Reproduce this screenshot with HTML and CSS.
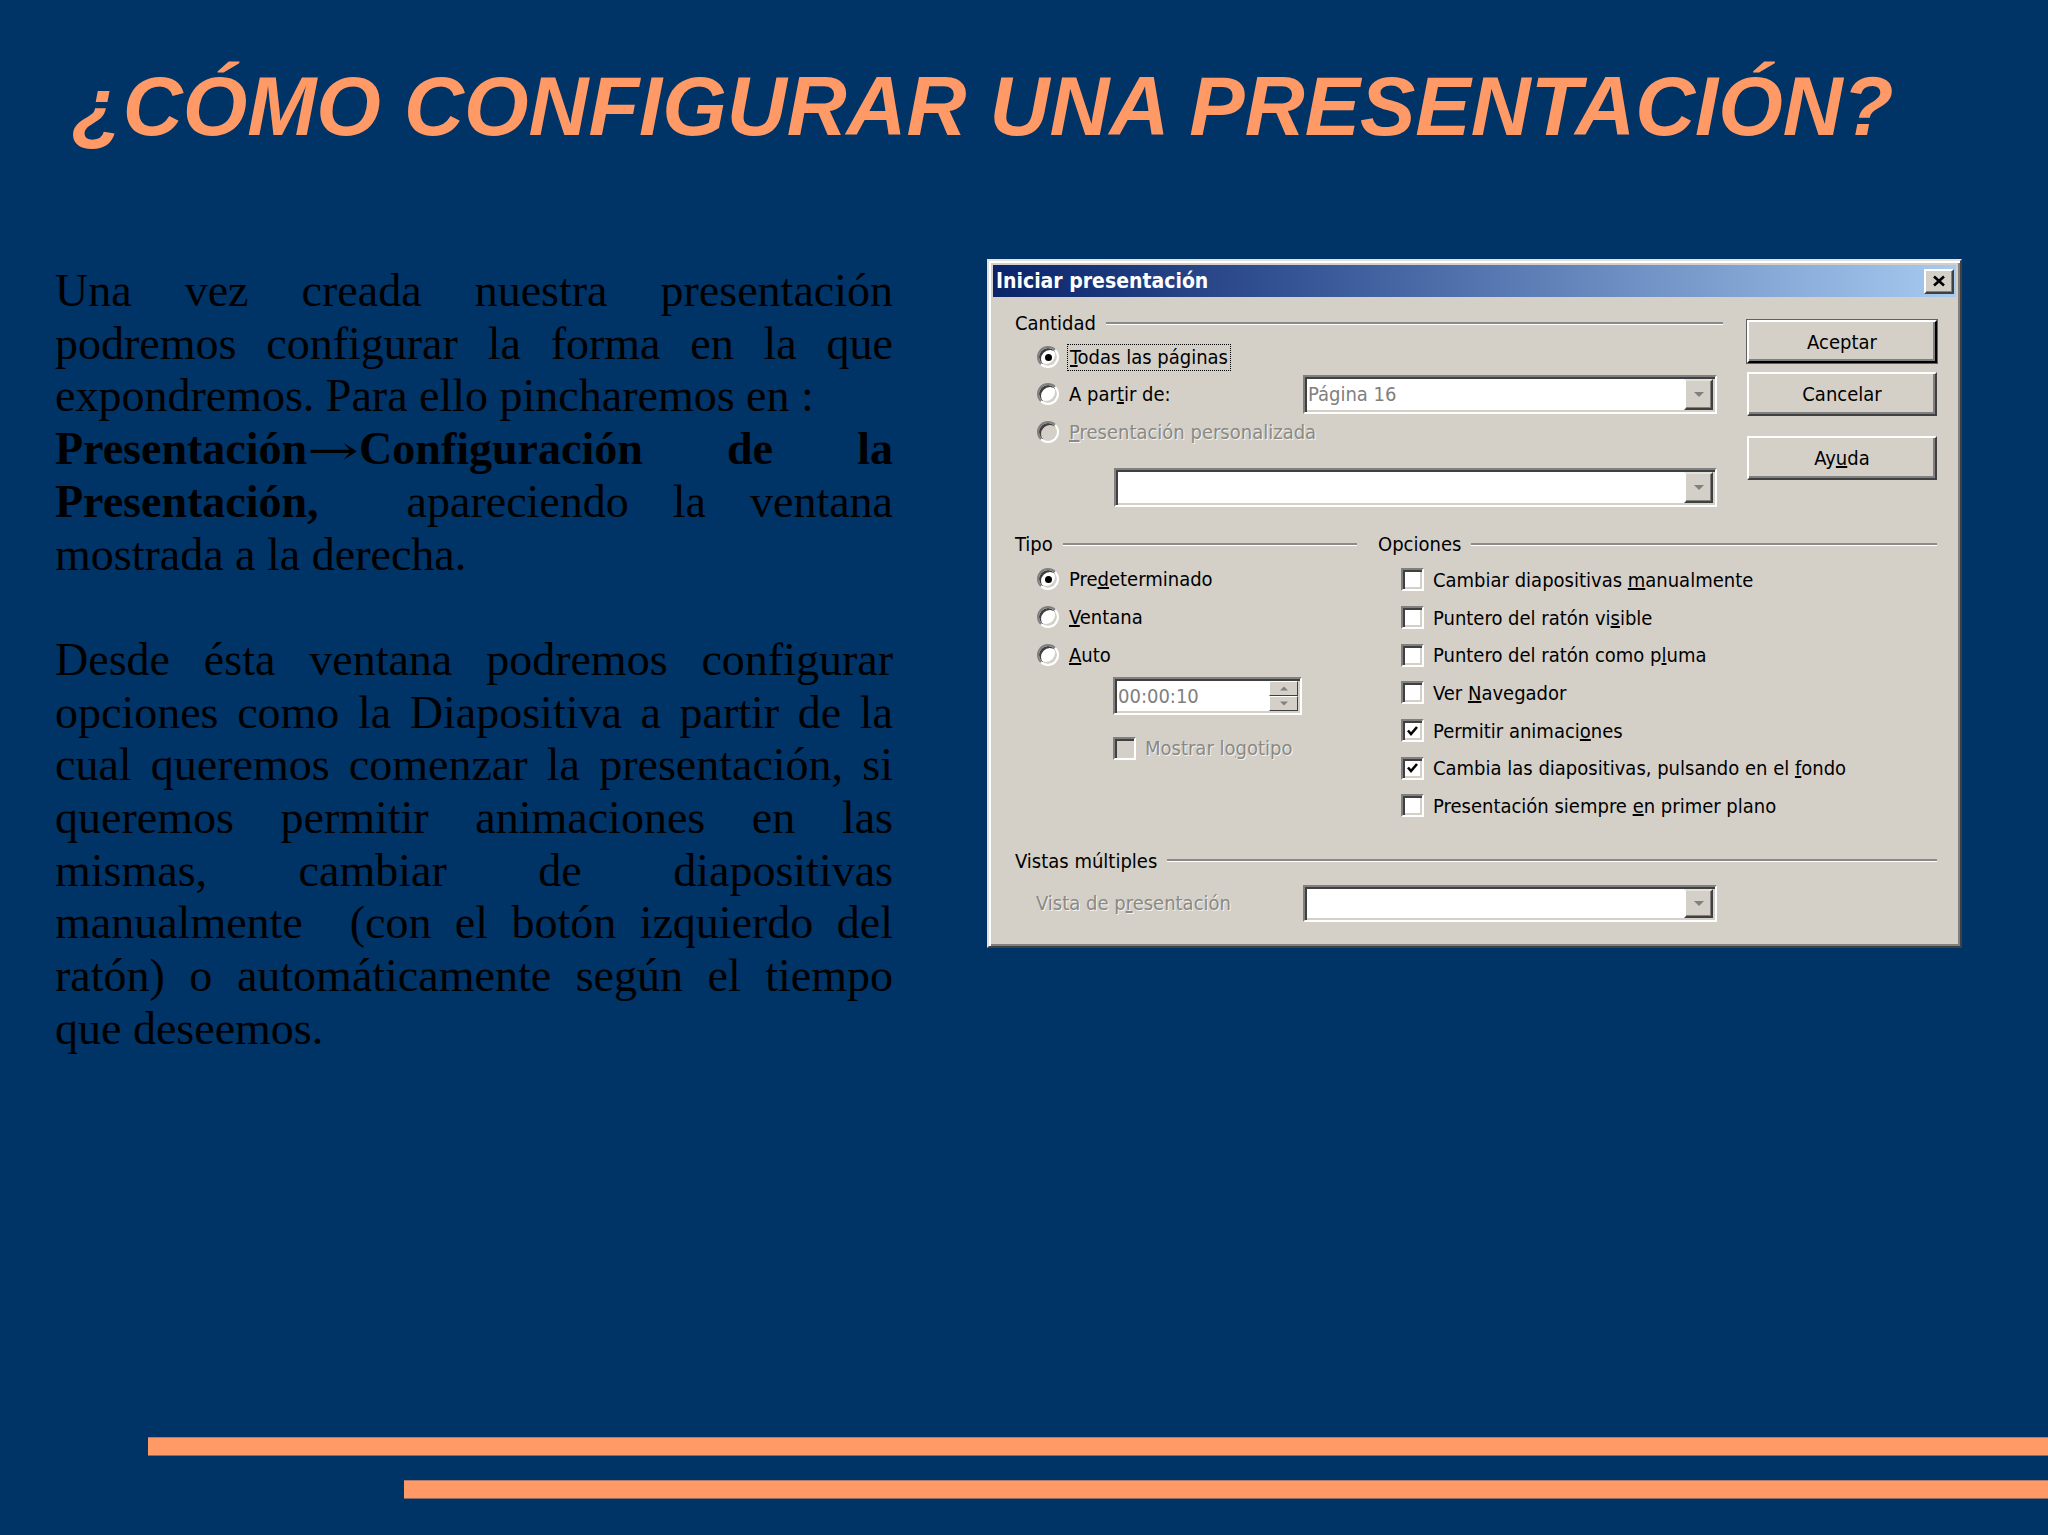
FILE: index.html
```html
<!DOCTYPE html>
<html lang="es">
<head>
<meta charset="utf-8">
<title>¿Cómo configurar una presentación?</title>
<link rel="stylesheet" href="styles.css">
</head>
<body>
<div class="slide">
  <h1 class="title">¿CÓMO CONFIGURAR UNA PRESENTACIÓN?</h1>

  <div class="content">
    <div class="text">
      <p>Una vez creada nuestra presentación podremos configurar la forma en la que expondremos. Para ello pincharemos en :<br><b>Presentación<span class="arrow">→</span>Configuración de la Presentación,</b>&nbsp; apareciendo la ventana mostrada a la derecha.</p>
      <p>Desde ésta ventana podremos configurar opciones como la Diapositiva a partir de la cual queremos comenzar la presentación, si queremos permitir animaciones en las mismas, cambiar de diapositivas manualmente&nbsp; (con el botón izquierdo del ratón) o automáticamente según el tiempo que deseemos.</p>
    </div>

    <div class="dialog">
      <div class="titlebar">
        <span class="wtitle">Iniciar presentación</span>
        <span class="close"><svg width="14" height="12" viewBox="0 0 14 12"><path d="M2 1.5 L12 10.5 M12 1.5 L2 10.5" stroke="#000" stroke-width="2.6" fill="none"/></svg></span>
      </div>

      <div class="dbody">
        <div class="top">
          <div class="cantidad">
            <div class="legend"><span>Cantidad</span></div>
            <div class="row r1"><span class="radio checked"></span><span class="lbl focus"><u>T</u>odas las páginas</span></div>
            <div class="row r2"><span class="radio"></span><span class="lbl">A par<u>t</u>ir de:</span>
              <div class="combo c-page"><span class="val">Página 16</span><span class="drop"><svg width="12" height="7" viewBox="0 0 12 7"><path d="M1 1 H11 L6 6 Z" fill="#808080"/></svg></span></div>
            </div>
            <div class="row r3"><span class="radio disabled"></span><span class="lbl dis"><u>P</u>resentación personalizada</span></div>
            <div class="combo c-custom"><span class="val"></span><span class="drop"><svg width="12" height="7" viewBox="0 0 12 7"><path d="M1 1 H11 L6 6 Z" fill="#808080"/></svg></span></div>
          </div>
          <div class="buttons">
            <div class="btn default">Aceptar</div>
            <div class="btn b-cancel">Cancelar</div>
            <div class="btn b-help">Ay<u>u</u>da</div>
          </div>
        </div>

        <div class="middle">
          <div class="tipo">
            <div class="legend"><span>Tipo</span></div>
            <div class="trows">
              <div class="row trow"><span class="radio checked"></span><span class="lbl">Pre<u>d</u>eterminado</span></div>
              <div class="row trow"><span class="radio"></span><span class="lbl"><u>V</u>entana</span></div>
              <div class="row trow"><span class="radio"></span><span class="lbl"><u>A</u>uto</span></div>
            </div>
            <div class="spin"><span class="val">00:00:10</span>
              <span class="sbtns">
                <span class="sb"><svg width="8" height="5" viewBox="0 0 8 5"><path d="M0 4.5 H8 L4 0.5 Z" fill="#808080"/></svg></span>
                <span class="sb"><svg width="8" height="5" viewBox="0 0 8 5"><path d="M0 0.5 H8 L4 4.5 Z" fill="#808080"/></svg></span>
              </span>
            </div>
            <div class="row logo"><span class="check disabled"></span><span class="lbl dis">Mostrar lo<u>g</u>otipo</span></div>
          </div>

          <div class="opciones">
            <div class="legend"><span>Opciones</span></div>
            <div class="orows">
              <div class="row orow"><span class="check"></span><span class="lbl">Cambiar diapositivas <u>m</u>anualmente</span></div>
              <div class="row orow"><span class="check"></span><span class="lbl">Puntero del ratón vi<u>s</u>ible</span></div>
              <div class="row orow"><span class="check"></span><span class="lbl">Puntero del ratón como p<u>l</u>uma</span></div>
              <div class="row orow"><span class="check"></span><span class="lbl">Ver <u>N</u>avegador</span></div>
              <div class="row orow"><span class="check on"><svg width="13" height="12" viewBox="0 0 13 12"><path d="M2 5.5 L5 9 L11 2" stroke="#000" stroke-width="2.6" fill="none"/></svg></span><span class="lbl">Permitir animaci<u>o</u>nes</span></div>
              <div class="row orow"><span class="check on"><svg width="13" height="12" viewBox="0 0 13 12"><path d="M2 5.5 L5 9 L11 2" stroke="#000" stroke-width="2.6" fill="none"/></svg></span><span class="lbl">Cambia las diapositivas, pulsando en el <u>f</u>ondo</span></div>
              <div class="row orow"><span class="check"></span><span class="lbl">Presentación siempre <u>e</u>n primer plano</span></div>
            </div>
          </div>
        </div>

        <div class="vistas">
          <div class="legend"><span>Vistas múltiples</span></div>
          <div class="row vrow"><span class="vlabel dis">Vista de p<u>r</u>esentación</span>
            <div class="combo c-view"><span class="val"></span><span class="drop"><svg width="12" height="7" viewBox="0 0 12 7"><path d="M1 1 H11 L6 6 Z" fill="#808080"/></svg></span></div>
          </div>
        </div>
      </div>
    </div>
  </div>

  <div class="bars">
    <div class="bar bar1"></div>
    <div class="bar bar2"></div>
  </div>
</div>
</body>
</html>
```

FILE: styles.css
```css
body {
  margin: 0;
  background: #003366;
}

.slide {
  width: 2048px;
  height: 1535px;
  background: #003366;
  display: flex;
  flex-direction: column;
  overflow: hidden;
}

.title {
  margin: 0;
  padding: 65px 0 0 72px;
  font-family: "Liberation Sans", Arial, sans-serif;
  font-style: italic;
  font-weight: bold;
  font-size: 83px;
  line-height: 83px;
  color: #ff9966;
  white-space: nowrap;
}

.content {
  display: flex;
  align-items: flex-start;
  margin-top: 111px;
  padding-left: 55px;
}

.text {
  width: 838px;
  margin-top: 6px;
  font-family: "Liberation Serif", "Times New Roman", serif;
  font-size: 46px;
  line-height: 52.7px;
  color: #000;
  text-align: justify;
}

.text p {
  margin: 0;
}

.text p + p {
  margin-top: 52.7px;
}

.arrow {
  display: inline-block;
  width: 52px;
  text-align: center;
  font-family: "DejaVu Serif", serif;
  font-weight: normal;
  font-size: 40px;
  line-height: 1;
  transform: scaleX(1.55);
}

/* ---------- dialog ---------- */
.dialog {
  margin-left: 94px;
  width: 975px;
  height: 689px;
  box-sizing: border-box;
  background: #d4d0c8;
  border: 2px solid;
  border-color: #e4e2dc #404040 #404040 #e4e2dc;
  box-shadow: inset 2px 2px 0 #fff, inset -2px -2px 0 #808080;
  padding: 4px;
  font-family: "DejaVu Sans Condensed", "DejaVu Sans", sans-serif;
  font-stretch: condensed;
  font-size: 20px;
  line-height: 24px;
  color: #000;
}

.titlebar {
  height: 32px;
  display: flex;
  align-items: center;
  justify-content: space-between;
  background: linear-gradient(to right, #0a246a 0%, #3a5a9a 35%, #a6caf0 100%);
  padding-left: 3px;
}

.wtitle {
  color: #fff;
  font-weight: bold;
  font-size: 21px;
}

.close {
  width: 30px;
  height: 25px;
  box-sizing: border-box;
  margin-right: 2px;
  background: #d4d0c8;
  border: 2px solid;
  border-color: #fff #404040 #404040 #fff;
  box-shadow: inset -1px -1px 0 #808080;
  display: flex;
  align-items: center;
  justify-content: center;
}

.dbody {
  padding: 14px 19px 0 22px;
}

.top {
  display: flex;
  align-items: flex-start;
}

.cantidad {
  width: 708px;
}

.legend {
  display: flex;
  align-items: center;
  height: 24px;
  white-space: nowrap;
}

.legend::after {
  content: "";
  flex: 1;
  margin-left: 10px;
  border-top: 2px solid #8c8a86;
  border-bottom: 1px solid #fff;
}

.row {
  display: flex;
  align-items: center;
  white-space: nowrap;
}

.r1 { margin-top: 5px; height: 34px; }
.r2 { height: 40px; }
.r3 { height: 36px; }

.radio {
  flex: none;
  width: 22px;
  height: 22px;
  box-sizing: border-box;
  margin-left: 22px;
  border-radius: 50%;
  background: #fff;
  border: 2px solid;
  border-color: #808080 #fff #fff #808080;
  box-shadow: inset 2px 2px 0 #404040, inset -2px -2px 0 #d4d0c8;
  display: flex;
  align-items: center;
  justify-content: center;
}

.radio.checked::after {
  content: "";
  width: 7px;
  height: 7px;
  border-radius: 50%;
  background: #000;
}

.radio.disabled {
  background: #d4d0c8;
}

.lbl {
  margin-left: 10px;
}

.focus {
  margin-left: 9px;
  padding: 0 2px;
  outline: 1px dotted #000;
  outline-offset: 0;
  line-height: 25px;
}

.dis {
  color: #8a8984;
  text-shadow: 1px 1px 0 #f4f3f0;
}

.combo {
  display: flex;
  box-sizing: border-box;
  background: #fff;
  border: 2px solid;
  border-color: #808080 #fff #fff #808080;
  box-shadow: inset 2px 2px 0 #404040, inset -2px -2px 0 #d4d0c8;
  padding: 2px;
}

.c-page {
  margin-left: auto;
  margin-right: 6px;
  width: 414px;
  height: 39px;
}

.c-custom {
  margin-top: 18px;
  margin-left: 99px;
  width: 603px;
  height: 39px;
}

.val {
  flex: 1;
  color: #808080;
  padding-left: 1px;
  line-height: 31px;
}

.drop {
  flex: none;
  width: 29px;
  box-sizing: border-box;
  background: #d4d0c8;
  border: 2px solid;
  border-color: #e4e2dc #404040 #404040 #fff;
  box-shadow: inset -1px -1px 0 #808080;
  display: flex;
  align-items: center;
  justify-content: center;
}

.buttons {
  margin-left: 24px;
  width: 190px;
}

.btn {
  box-sizing: border-box;
  height: 44px;
  background: #d4d0c8;
  border: 2px solid;
  border-color: #fff #404040 #404040 #fff;
  box-shadow: inset -2px -2px 0 #808080;
  display: flex;
  align-items: center;
  justify-content: center;
}

.btn.default {
  margin-top: 9px;
  height: 43px;
  border-color: #fff #000 #000 #fff;
  box-shadow: inset -2px -2px 0 #808080, 0 0 0 1px #606060;
}

.b-cancel { margin-top: 9px; }
.b-help { margin-top: 20px; }

.middle {
  display: flex;
  align-items: flex-start;
  margin-top: 25px;
}

.tipo {
  width: 342px;
}

.trows {
  margin-top: 4px;
}

.trow {
  height: 38px;
}

.spin {
  display: flex;
  box-sizing: border-box;
  margin-top: 3px;
  margin-left: 98px;
  width: 189px;
  height: 38px;
  background: #fff;
  border: 2px solid;
  border-color: #808080 #fff #fff #808080;
  box-shadow: inset 2px 2px 0 #404040, inset -2px -2px 0 #d4d0c8;
  padding: 2px;
}

.sbtns {
  flex: none;
  width: 29px;
  display: flex;
  flex-direction: column;
}

.sb {
  flex: 1;
  box-sizing: border-box;
  background: #d4d0c8;
  border: 1px solid;
  border-color: #fff #404040 #404040 #fff;
  display: flex;
  align-items: center;
  justify-content: center;
}

.logo {
  margin-top: 14px;
  height: 38px;
}

.check {
  flex: none;
  width: 23px;
  height: 23px;
  box-sizing: border-box;
  background: #fff;
  border: 2px solid;
  border-color: #808080 #fff #fff #808080;
  box-shadow: inset 2px 2px 0 #404040, inset -2px -2px 0 #d4d0c8;
  display: flex;
  align-items: center;
  justify-content: center;
}

.check.disabled {
  background: #d4d0c8;
}

.logo .check {
  margin-left: 98px;
}

.logo .lbl {
  margin-left: 9px;
}

.opciones {
  flex: 1;
  margin-left: 21px;
}

.orows {
  margin-top: 5px;
}

.orow {
  height: 37.7px;
}

.orow .check {
  margin-left: 23px;
}

.orow .lbl {
  margin-left: 9px;
}

.vistas {
  margin-top: 24px;
}

.vrow {
  margin-top: 12px;
}

.vlabel {
  margin-left: 21px;
  width: 267px;
}

.c-view {
  width: 414px;
  height: 37px;
}

/* ---------- footer bars ---------- */
.bars {
  margin-top: auto;
  padding-bottom: 36px;
}

.bar {
  height: 19px;
  box-sizing: border-box;
  background: #ff9966;
  border-top: 1px solid #b07a6c;
  border-bottom: 1px solid #8a6a68;
}

.bar1 {
  margin-left: 148px;
}

.bar2 {
  margin-left: 404px;
  margin-top: 24px;
}
```
